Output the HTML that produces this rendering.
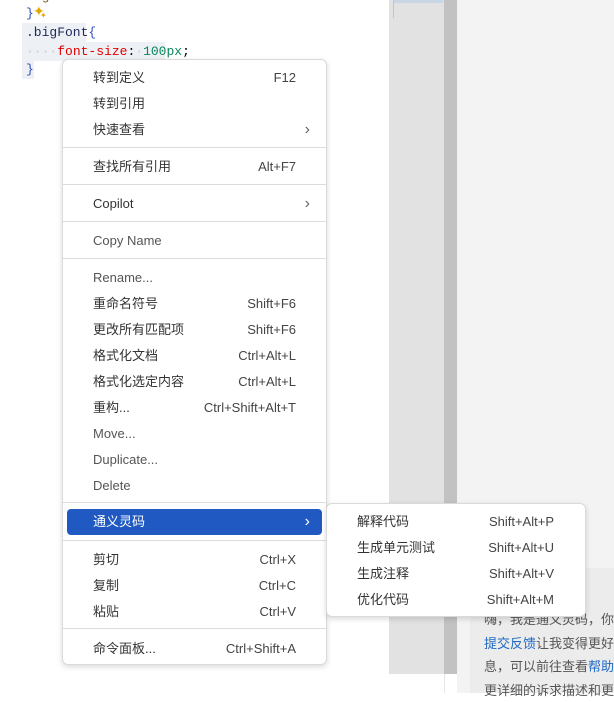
<!DOCTYPE html>
<html><head><meta charset="utf-8"><style>
*{margin:0;padding:0;box-sizing:border-box}
body{width:614px;height:693px;overflow:hidden;background:#fff;position:relative;font-family:"Liberation Sans","Noto Sans CJK SC",sans-serif;}
.abs{position:absolute}
.code{font-family:"Liberation Mono",monospace;font-size:13px;white-space:pre;line-height:18px}
.menu{position:absolute;background:#fff;border:1px solid #dadada;border-radius:6px;box-shadow:0 2px 6px rgba(0,0,0,.15);font-size:13px;color:#333}
.it{position:absolute;left:4px;right:4px;height:26px;line-height:26px;padding-left:26px}
.it .k{position:absolute;right:26px;top:0;color:#444}
.it .ar{position:absolute;right:12px;top:0;color:#666;font-size:16px;font-weight:300}
.sep{position:absolute;left:0;right:0;height:1px;background:#dcdcdc}
.dim{color:#555}
</style></head><body>
<div class="abs" style="left:389px;top:0;width:55px;height:674px;background:#e2e2e2"></div>
<div class="abs" style="left:393px;top:0;width:50px;height:3px;background:#c9d6e6"></div>
<div class="abs" style="left:393px;top:0;width:1px;height:18px;background:#b8c8dc"></div>
<div class="abs" style="left:444px;top:0;width:13px;height:674px;background:#c2c2c2"></div>
<div class="abs" style="left:457px;top:0;width:157px;height:693px;background:#f3f3f3"></div>
<div class="abs" style="left:470px;top:568px;width:144px;height:125px;background:#ececec"></div>
<div class="abs" style="left:444px;top:674px;width:1px;height:19px;background:#e6e6e6"></div>
<div class="abs" style="left:484px;top:608px;font-size:13px;line-height:23.5px;color:#555;white-space:nowrap">嗨，我是通义灵码，你<br><span style="color:#1d68c4">提交反馈</span>让我变得更好<br>息，可以前往查看<span style="color:#1d68c4">帮助</span><br>更详细的诉求描述和更</div>
<div class="abs code" style="left:26px;top:-12px;color:#795e26">  g</div>
<div class="abs code" style="left:26px;top:5px;color:#3050c0">}</div>
<div class="abs" style="left:33px;top:3px;color:#e0a800;font-size:14px">✦</div>
<div class="abs" style="left:40px;top:11px;color:#e0a800;font-size:8px">✦</div>
<div class="abs" style="left:22px;top:23px;width:64px;height:19px;background:#edf0f4"></div>
<div class="abs" style="left:22px;top:42px;width:143px;height:19px;background:#edf0f4"></div>
<div class="abs" style="left:22px;top:61px;width:12px;height:18px;background:#edf0f4"></div>
<div class="abs code" style="left:26px;top:24px;color:#1f2a5a">.bigFont<span style="color:#3050c0">{</span></div>
<div class="abs code" style="left:26px;top:43px;color:#ccc">····<span style="color:#e50000">font-size</span><span style="color:#000">:</span>·<span style="color:#098658">100px</span><span style="color:#000">;</span></div>
<div class="abs code" style="left:26px;top:61px;color:#3050c0">}</div>
<div class="menu" style="left:62px;top:59px;width:265px;height:606px">
<div class="it" style="top:5px">转到定义<span class="k">F12</span></div>
<div class="it" style="top:31px">转到引用</div>
<div class="it" style="top:57px">快速查看<span class="ar">›</span></div>
<div class="sep" style="top:87px"></div>
<div class="it" style="top:94px">查找所有引用<span class="k">Alt+F7</span></div>
<div class="sep" style="top:124px"></div>
<div class="it" style="top:131px">Copilot<span class="ar">›</span></div>
<div class="sep" style="top:161px"></div>
<div class="it dim" style="top:168px">Copy Name</div>
<div class="sep" style="top:198px"></div>
<div class="it dim" style="top:205px">Rename...</div>
<div class="it" style="top:231px">重命名符号<span class="k">Shift+F6</span></div>
<div class="it" style="top:257px">更改所有匹配项<span class="k">Shift+F6</span></div>
<div class="it" style="top:283px">格式化文档<span class="k">Ctrl+Alt+L</span></div>
<div class="it" style="top:309px">格式化选定内容<span class="k">Ctrl+Alt+L</span></div>
<div class="it" style="top:335px">重构...<span class="k">Ctrl+Shift+Alt+T</span></div>
<div class="it dim" style="top:361px">Move...</div>
<div class="it dim" style="top:387px">Duplicate...</div>
<div class="it dim" style="top:413px">Delete</div>
<div class="sep" style="top:442px"></div>
<div class="it" style="top:449px;background:#2059c1;color:#fff;border-radius:4px">通义灵码<span class="ar" style="color:#fff">›</span></div>
<div class="sep" style="top:480px"></div>
<div class="it" style="top:487px">剪切<span class="k">Ctrl+X</span></div>
<div class="it" style="top:513px">复制<span class="k">Ctrl+C</span></div>
<div class="it" style="top:539px">粘贴<span class="k">Ctrl+V</span></div>
<div class="sep" style="top:568px"></div>
<div class="it" style="top:576px">命令面板...<span class="k">Ctrl+Shift+A</span></div>
</div>
<div class="menu" style="left:326px;top:503px;width:260px;height:114px">
<div class="it" style="top:5px">解释代码<span class="k" style="right:27px">Shift+Alt+P</span></div>
<div class="it" style="top:31px">生成单元测试<span class="k" style="right:27px">Shift+Alt+U</span></div>
<div class="it" style="top:57px">生成注释<span class="k" style="right:27px">Shift+Alt+V</span></div>
<div class="it" style="top:83px">优化代码<span class="k" style="right:27px">Shift+Alt+M</span></div>
</div>
</body></html>
